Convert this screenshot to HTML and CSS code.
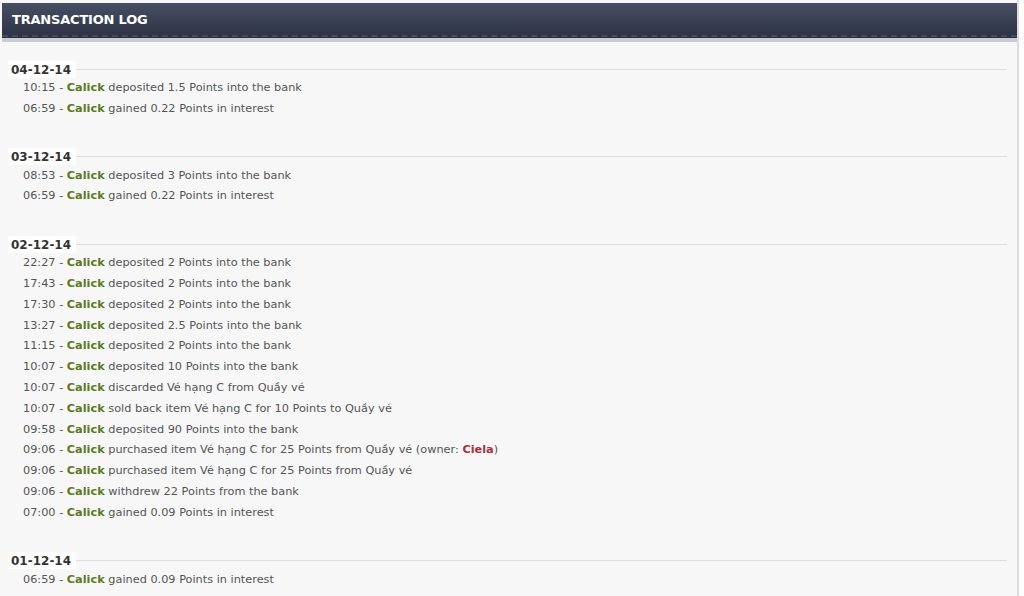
FILE: index.html
```html
<!DOCTYPE html>
<html lang="en">
<head>
  <meta charset="UTF-8" />
  <title>Transaction Log</title>
  <link rel="stylesheet" href="styles.css">
</head>
<body>

  <div class="panel">
    <!-- Header bar -->
    <div class="panel-head">
      <h2>TRANSACTION LOG</h2>
    </div>

    <div class="log">
      <div class="day">
        <div class="date"><span>04-12-14</span></div>
        <div class="entry">10:15 - <b class="user">Calick</b> deposited 1.5 Points into the bank</div>
        <div class="entry">06:59 - <b class="user">Calick</b> gained 0.22 Points in interest</div>
      </div>

      <div class="day">
        <div class="date"><span>03-12-14</span></div>
        <div class="entry">08:53 - <b class="user">Calick</b> deposited 3 Points into the bank</div>
        <div class="entry">06:59 - <b class="user">Calick</b> gained 0.22 Points in interest</div>
      </div>

      <div class="day">
        <div class="date"><span>02-12-14</span></div>
        <div class="entry">22:27 - <b class="user">Calick</b> deposited 2 Points into the bank</div>
        <div class="entry">17:43 - <b class="user">Calick</b> deposited 2 Points into the bank</div>
        <div class="entry">17:30 - <b class="user">Calick</b> deposited 2 Points into the bank</div>
        <div class="entry">13:27 - <b class="user">Calick</b> deposited 2.5 Points into the bank</div>
        <div class="entry">11:15 - <b class="user">Calick</b> deposited 2 Points into the bank</div>
        <div class="entry">10:07 - <b class="user">Calick</b> deposited 10 Points into the bank</div>
        <div class="entry">10:07 - <b class="user">Calick</b> discarded Vé hạng C from Quầy vé</div>
        <div class="entry">10:07 - <b class="user">Calick</b> sold back item Vé hạng C for 10 Points to Quầy vé</div>
        <div class="entry">09:58 - <b class="user">Calick</b> deposited 90 Points into the bank</div>
        <div class="entry">09:06 - <b class="user">Calick</b> purchased item Vé hạng C for 25 Points from Quầy vé (owner: <b class="owner">Ciela</b>)</div>
        <div class="entry">09:06 - <b class="user">Calick</b> purchased item Vé hạng C for 25 Points from Quầy vé</div>
        <div class="entry">09:06 - <b class="user">Calick</b> withdrew 22 Points from the bank</div>
        <div class="entry">07:00 - <b class="user">Calick</b> gained 0.09 Points in interest</div>
      </div>

      <div class="day">
        <div class="date"><span>01-12-14</span></div>
        <div class="entry">06:59 - <b class="user">Calick</b> gained 0.09 Points in interest</div>
      </div>
    </div>
  </div>

</body>
</html>
```

FILE: styles.css
```css
body {
  margin: 0;
  background: #ffffff;
  font-family: "DejaVu Sans", Verdana, sans-serif;
  font-size: 11.3px;
  color: #555;
}
.panel {
  width: 1019px;
  height: 596px;
  padding-top: 3px;
  box-sizing: border-box;
  background: #f7f7f7;
  border-right: 2px solid #dcdcdc;
  overflow: hidden;
}
.panel-head {
  height: 35px;
  margin-left: 2px;
  background: linear-gradient(#474f63, #2c3243);
  position: relative;
  border-bottom: 4px solid #c8cdd4;
}
.panel-head::after {
  content: "";
  position: absolute;
  left: 0;
  right: 0;
  bottom: 1px;
  border-top: 2px dashed #454c5c;
}
.panel-head h2 {
  margin: 0;
  padding: 9px 0 0 10px;
  font-family: "DejaVu Sans", Verdana, sans-serif;
  font-size: 13px;
  font-weight: bold;
  color: #fff;
  letter-spacing: -0.2px;
}
.log {
  padding: 18px 10px 0 8px;
}
.day {
  margin-bottom: 28px;
}
.date {
  height: 18px;
  display: flex;
  align-items: center;
  font-size: 12px;
  font-weight: bold;
  color: #333;
}
.date::after {
  content: "";
  flex: 1;
  border-top: 1px solid #dedede;
}
.date span {
  background: #fff;
  padding: 2px 5px 1px 3px;
}
.entry {
  height: 20.8px;
  line-height: 19px;
  padding-left: 15px;
}
.user {
  color: #5b7a25;
}
.owner {
  color: #a8323c;
}
```
